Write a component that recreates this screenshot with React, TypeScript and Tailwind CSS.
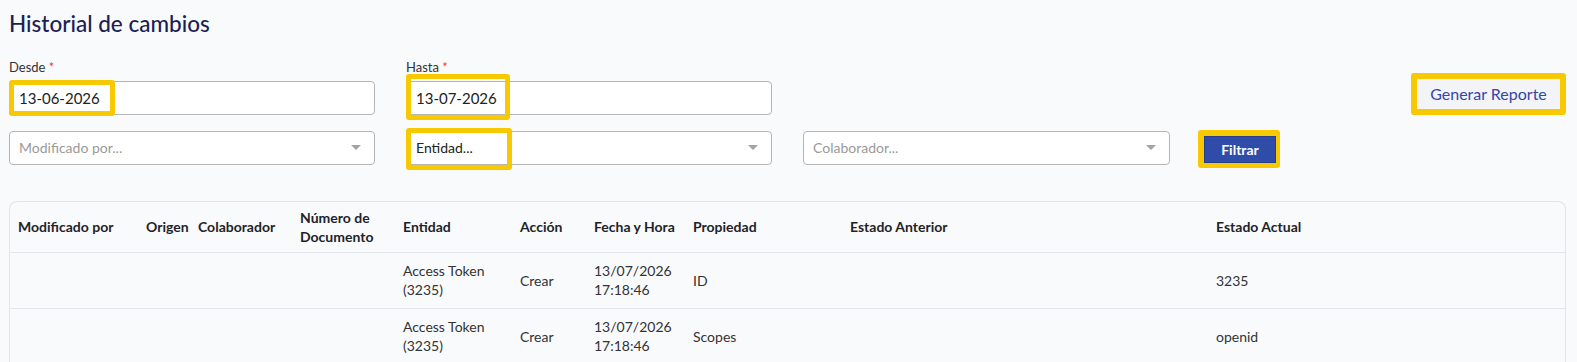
import React from "react";

const YELLOW = "border-[#f8c800]";

function Caret() {
  return (
    <span className="ml-auto mr-[13px] block h-0 w-0 border-x-[5px] border-t-[5px] border-x-transparent border-t-[#a3a3a3]" />
  );
}

function DateField({
  label,
  value,
  hl,
}: {
  label: string;
  value: string;
  hl: string;
}) {
  return (
    <div className="w-[366px]">
      <div className="mb-[4px] h-5 text-[13px] leading-5 text-[#333]">
        {label} <span className="text-[#e53e3e]">*</span>
      </div>
      <div className="relative flex h-[34px] items-center rounded-[4px] border border-[#b5b5b5] bg-white pl-[9px] text-[15px] text-[#222]">
        {value}
        <span className={`pointer-events-none absolute left-[-1px] rounded-[3px] border-[5px] ${YELLOW} ${hl}`} />
      </div>
    </div>
  );
}

function SelectField({
  placeholder,
  dark,
  hl,
  w = "w-[366px]",
}: {
  placeholder: string;
  dark?: boolean;
  hl?: string;
  w?: string;
}) {
  return (
    <div
      className={`relative flex h-[34px] ${w} items-center rounded-[4px] border border-[#b5b5b5] bg-white pl-[9px] text-[14px] ${
        dark ? "text-[#222]" : "text-[#9a9a9a]"
      }`}
    >
      <span>{placeholder}</span>
      <Caret />
      {hl && (
        <span className={`pointer-events-none absolute left-[-1px] rounded-[3px] border-[5px] ${YELLOW} ${hl}`} />
      )}
    </div>
  );
}

const cols = [128, 52, 102, 103, 117, 74, 99, 157, 366, 357];

const headers: React.ReactNode[] = [
  "Modificado por",
  "Origen",
  "Colaborador",
  <>
    Número de
    <br />
    Documento
  </>,
  "Entidad",
  "Acción",
  "Fecha y Hora",
  "Propiedad",
  "Estado Anterior",
  "Estado Actual",
];

const rows = [
  { prop: "ID", actual: "3235" },
  { prop: "Scopes", actual: "openid" },
];

export default function App() {
  return (
    <div
      className="min-h-[362px] w-full overflow-hidden bg-[#f9fafc] pl-[9px] pr-[11px] pt-[10px]"
      style={{ fontFamily: "Lato, 'Noto Sans', sans-serif" }}
    >
      <h1 className="h-7 text-[22.5px] font-medium leading-7 text-[#1c1f55]">
        Historial de cambios
      </h1>

      <div className="mt-[19px] flex items-start">
        <DateField label="Desde" value="13-06-2026" hl="top-[-2px] h-[36px] w-[106px]" />
        <div className="ml-[31px]">
          <DateField label="Hasta" value="13-07-2026" hl="top-[-8px] h-[46px] w-[104px]" />
        </div>
        <div className="ml-auto mt-[16px] rounded-[3px] border-[6px] border-[#f8c800]">
          <button className="h-[30px] w-[143px] bg-[#f3f4f7] text-[16px] text-[#3446a6]">
            Generar Reporte
          </button>
        </div>
      </div>

      <div className="mt-[12px] flex items-center">
        <SelectField placeholder="Modificado por..." />
        <div className="ml-[31px]">
          <SelectField placeholder="Entidad..." dark hl="top-[-4px] h-[42px] w-[106px]" />
        </div>
        <div className="ml-[31px]">
          <SelectField placeholder="Colaborador..." w="w-[367px]" />
        </div>
        <div className="ml-[28px] mt-[3px] rounded-[3px] border-[6px] border-r-[4px] border-b-[5px] border-[#f8c800]">
          <button className="block h-[27px] w-[72px] border border-[#26408f] bg-[#2f4ca8] text-[14px] font-bold text-white">
            Filtrar
          </button>
        </div>
      </div>

      <div className="mt-[33px] overflow-hidden rounded-t-[8px] border border-b-0 border-[#e3e5ea]">
        <table className="w-full table-fixed border-collapse text-left">
          <colgroup>
            {cols.map((c, i) => (
              <col key={i} style={{ width: c }} />
            ))}
          </colgroup>
          <thead>
            <tr className="h-[50px] border-b border-[#e3e5ea]">
              {headers.map((h, i) => (
                <th
                  key={i}
                  className="px-2 align-middle text-[14px] font-bold leading-[19px] text-[#1f2328]"
                >
                  {h}
                </th>
              ))}
            </tr>
          </thead>
          <tbody>
            {rows.map((r, i) => (
              <tr key={i} className="h-[56px] border-b border-[#e3e5ea] text-[14px] leading-[19px] text-[#333]">
                <td className="px-2" />
                <td className="px-2" />
                <td className="px-2" />
                <td className="px-2" />
                <td className="px-2">
                  Access Token
                  <br />
                  (3235)
                </td>
                <td className="px-2">Crear</td>
                <td className="px-2">
                  13/07/2026
                  <br />
                  17:18:46
                </td>
                <td className="px-2">{r.prop}</td>
                <td className="px-2" />
                <td className="px-2">{r.actual}</td>
              </tr>
            ))}
          </tbody>
        </table>
      </div>
    </div>
  );
}
